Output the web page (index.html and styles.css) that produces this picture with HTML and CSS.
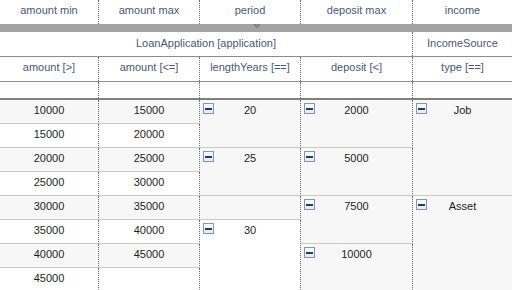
FILE: index.html
```html
<!DOCTYPE html>
<html>
<head>
<meta charset="utf-8">
<link rel="stylesheet" href="styles.css">
</head>
<body>
<div class="sheet">
  <div class="row head">
    <div class="cell">amount min</div>
    <div class="cell">amount max</div>
    <div class="cell">period</div>
    <div class="cell">deposit max</div>
    <div class="cell last">income</div>
  </div>
  <div class="bar"><span class="tri"></span></div>
  <div class="row group">
    <div class="cell span4">LoanApplication [application]</div>
    <div class="cell last">IncomeSource</div>
  </div>
  <div class="row sub">
    <div class="cell">amount [&gt;]</div>
    <div class="cell">amount [&lt;=]</div>
    <div class="cell">lengthYears [==]</div>
    <div class="cell">deposit [&lt;]</div>
    <div class="cell last">type [==]</div>
  </div>
  <div class="row empty">
    <div class="cell"></div>
    <div class="cell"></div>
    <div class="cell"></div>
    <div class="cell"></div>
    <div class="cell last"></div>
  </div>
  <div class="body">
    <div class="d c1 r1 alt">10000</div>
    <div class="d c1 r2">15000</div>
    <div class="d c1 r3 alt">20000</div>
    <div class="d c1 r4">25000</div>
    <div class="d c1 r5 alt">30000</div>
    <div class="d c1 r6">35000</div>
    <div class="d c1 r7 alt">40000</div>
    <div class="d c1 r8">45000</div>

    <div class="d c2 r1 alt">15000</div>
    <div class="d c2 r2">20000</div>
    <div class="d c2 r3 alt">25000</div>
    <div class="d c2 r4">30000</div>
    <div class="d c2 r5 alt">35000</div>
    <div class="d c2 r6">40000</div>
    <div class="d c2 r7 alt">45000</div>
    <div class="d c2 r8"></div>

    <div class="d m c3 r1 s2 alt"><span class="ico"></span><span class="v">20</span></div>
    <div class="d m c3 r3 s2 alt"><span class="ico"></span><span class="v">25</span></div>
    <div class="d c3 r5 alt"></div>
    <div class="d m c3 r6 s3"><span class="ico"></span><span class="v">30</span></div>

    <div class="d m c4 r1 s2 alt"><span class="ico"></span><span class="v">2000</span></div>
    <div class="d m c4 r3 s2 alt"><span class="ico"></span><span class="v">5000</span></div>
    <div class="d m c4 r5 s2 alt"><span class="ico"></span><span class="v">7500</span></div>
    <div class="d m c4 r7 s2 alt"><span class="ico"></span><span class="v">10000</span></div>

    <div class="d m c5 r1 s4 alt last"><span class="ico"></span><span class="v">Job</span></div>
    <div class="d m c5 r5 s4 alt last"><span class="ico"></span><span class="v">Asset</span></div>
  </div>
</div>
</body>
</html>
```

FILE: styles.css
```css
html, body {
  margin: 0;
  padding: 0;
  overflow: hidden;
  background: #ffffff;
}

.sheet {
  width: 512px;
  font-family: "Liberation Sans", Arial, sans-serif;
  font-size: 11px;
  color: #1e1e1e;
}

.row,
.body {
  display: grid;
  grid-template-columns: 99px 101px 101px 112px 99px;
}

.cell {
  box-sizing: border-box;
  border-right: 1px dotted #6f6f6f;
  text-align: center;
  line-height: 20px;
  color: #4a5878;
}

.cell.last {
  border-right: none;
}

.head .cell {
  height: 24px;
}

.bar {
  height: 8px;
  background: #a3a3a3;
  display: flex;
  justify-content: center;
}

.tri {
  width: 0;
  height: 0;
  margin-left: 1px;
  border-left: 4px solid transparent;
  border-right: 4px solid transparent;
  border-top: 5px solid #7c8698;
}

.group {
  border-bottom: 1px solid #8c8c8c;
}

.group .cell {
  height: 24px;
  padding-top: 1px;
}

.span4 {
  grid-column: 1 / 5;
}

.sub {
  border-bottom: 1px solid #8c8c8c;
}

.sub .cell {
  height: 24px;
}

.empty {
  border-bottom: 2px solid #808080;
}

.empty .cell {
  height: 16px;
}

.body {
  grid-template-rows: repeat(8, 24px);
}

.d {
  box-sizing: border-box;
  border-right: 1px dotted #6f6f6f;
  border-bottom: 1px solid #c9c9c9;
  background: #ffffff;
  text-align: center;
  line-height: 20px;
  padding-top: 0;
}

.d.alt {
  background: #f7f7f7;
}

.d.last {
  border-right: none;
}

.c1 { grid-column: 1; }
.c2 { grid-column: 2; }
.c3 { grid-column: 3; }
.c4 { grid-column: 4; }
.c5 { grid-column: 5; }

.r1 { grid-row-start: 1; }
.r2 { grid-row-start: 2; }
.r3 { grid-row-start: 3; }
.r4 { grid-row-start: 4; }
.r5 { grid-row-start: 5; }
.r6 { grid-row-start: 6; }
.r7 { grid-row-start: 7; }
.r8 { grid-row-start: 8; }

.s2 { grid-row-end: span 2; }
.s3 { grid-row-end: span 3; }
.s4 { grid-row-end: span 4; }

.m {
  display: grid;
  grid-template-columns: 14px 1fr 14px;
  align-content: start;
  align-items: start;
}

.ico {
  grid-column: 1;
  box-sizing: border-box;
  width: 11px;
  height: 11px;
  margin: 3px 0 0 3px;
  border: 1px solid #8496b4;
  background: linear-gradient(#ffffff, #e2e8f1);
  display: flex;
  align-items: center;
  justify-content: center;
}

.ico::before {
  content: "";
  width: 7px;
  height: 2px;
  background: #1d3c6c;
}

.v {
  grid-column: 2;
  text-align: center;
}
```
